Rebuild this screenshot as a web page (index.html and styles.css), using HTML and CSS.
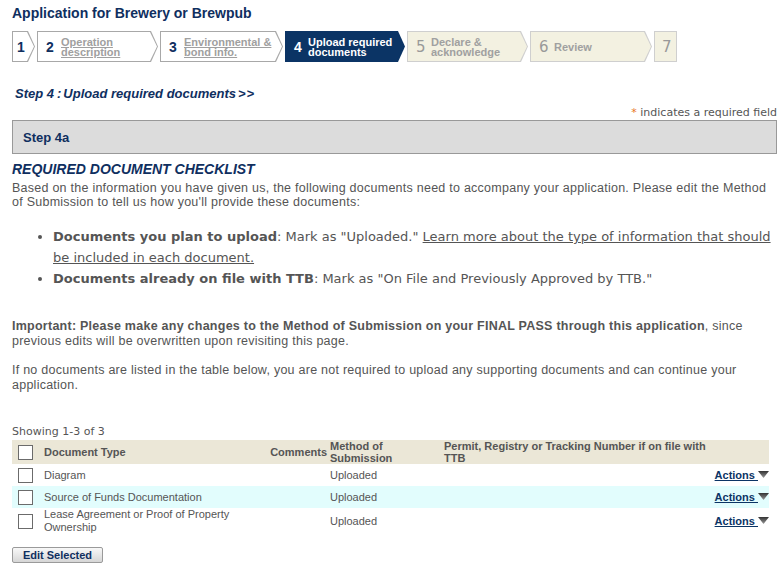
FILE: index.html
```html
<!DOCTYPE html>
<html>
<head>
<meta charset="utf-8">
<link rel="stylesheet" href="styles.css">
</head>
<body>
<div class="page">
  <h1 class="title">Application for Brewery or Brewpub</h1>

  <div class="stepper">
    <div class="step done w1"><div class="step-in"><span class="num">1</span></div></div>
    <div class="step done w2"><div class="step-in"><span class="num">2</span><a class="lbl" href="#">Operation<br>description</a></div></div>
    <div class="step done w3"><div class="step-in"><span class="num">3</span><a class="lbl" href="#">Environmental &amp;<br>bond info.</a></div></div>
    <div class="step active w4"><div class="step-in"><span class="num">4</span><span class="lbl">Upload required<br>documents</span></div></div>
    <div class="step todo w5"><div class="step-in"><span class="num">5</span><span class="lbl">Declare &amp;<br>acknowledge</span></div></div>
    <div class="step todo w6"><div class="step-in"><span class="num">6</span><span class="lbl">Review</span></div></div>
    <div class="step todo last w7"><div class="step-in"><span class="num">7</span></div></div>
  </div>

  <h2 class="step-head">Step 4<span class="colon">:</span>Upload required documents<span class="gt">&gt;&gt;</span></h2>

  <div class="req-note"><span class="ast">*</span> indicates a required field</div>

  <div class="panel-head">Step 4a</div>

  <h3 class="check-head">REQUIRED DOCUMENT CHECKLIST</h3>
  <p class="txt">Based on the information you have given us, the following documents need to accompany your application. Please edit the Method of Submission to tell us how you'll provide these documents:</p>

  <ul class="bullets">
    <li><b>Documents you plan to upload</b>: Mark as "Uploaded." <a href="#">Learn more about the type of information that should be included in each document.</a></li>
    <li><b>Documents already on file with TTB</b>: Mark as "On File and Previously Approved by TTB."</li>
  </ul>

  <p class="txt important"><b>Important: Please make any changes to the Method of Submission on your FINAL PASS through this application</b>, since previous edits will be overwritten upon revisiting this page.</p>

  <p class="txt ifno">If no documents are listed in the table below, you are not required to upload any supporting documents and can continue your application.</p>

  <div class="showing">Showing 1-3 of 3</div>

  <table class="docs">
    <colgroup>
      <col class="c-chk"><col class="c-type"><col class="c-com"><col class="c-meth"><col class="c-perm"><col class="c-act">
    </colgroup>
    <thead>
      <tr>
        <th class="chk"><span class="box"></span></th>
        <th class="type">Document Type</th>
        <th class="com">Comments</th>
        <th class="meth">Method of<br>Submission</th>
        <th class="perm">Permit, Registry or Tracking Number if on file with TTB</th>
        <th class="act"></th>
      </tr>
    </thead>
    <tbody>
      <tr>
        <td class="chk"><span class="box"></span></td>
        <td class="type">Diagram</td>
        <td class="com"></td>
        <td class="meth">Uploaded</td>
        <td class="perm"></td>
        <td class="act"><a href="#">Actions&nbsp;</a><svg class="tri" width="11" height="7" viewBox="0 0 11 7"><defs><linearGradient id="tg" x1="0" y1="0" x2="0" y2="1"><stop offset="0" stop-color="#333"/><stop offset="1" stop-color="#999"/></linearGradient></defs><polygon points="0,0 11,0 5.5,7" fill="url(#tg)"/></svg></td>
      </tr>
      <tr class="alt">
        <td class="chk"><span class="box"></span></td>
        <td class="type">Source of Funds Documentation</td>
        <td class="com"></td>
        <td class="meth">Uploaded</td>
        <td class="perm"></td>
        <td class="act"><a href="#">Actions&nbsp;</a><svg class="tri" width="11" height="7" viewBox="0 0 11 7"><polygon points="0,0 11,0 5.5,7" fill="url(#tg)"/></svg></td>
      </tr>
      <tr class="tall">
        <td class="chk"><span class="box"></span></td>
        <td class="type">Lease Agreement or Proof of Property Ownership</td>
        <td class="com"></td>
        <td class="meth">Uploaded</td>
        <td class="perm"></td>
        <td class="act"><a href="#">Actions&nbsp;</a><svg class="tri" width="11" height="7" viewBox="0 0 11 7"><polygon points="0,0 11,0 5.5,7" fill="url(#tg)"/></svg></td>
      </tr>
    </tbody>
  </table>

  <button class="btn" type="button">Edit Selected</button>
</div>
</body>
</html>
```

FILE: styles.css
```css
* { box-sizing: border-box; }
html, body { margin: 0; padding: 0; background: #fff; }
body { font-family: "Liberation Sans", Arial, sans-serif; color: #555; }
.page { padding: 5px 6px 0 12px; width: 783px; }

.title { margin: 0; font-size: 14px; line-height: 16px; font-weight: bold; color: #0f2f5f; }

.stepper { display: flex; gap: 2px; margin-top: 10px; height: 31px; }
.step {
  height: 31px; padding: 1px;
  clip-path: polygon(0 0, calc(100% - 7px) 0, 100% 50%, calc(100% - 7px) 100%, 0 100%);
}
.step-in {
  height: 100%; display: flex; align-items: center;
  clip-path: polygon(0 0, calc(100% - 7px) 0, 100% 50%, calc(100% - 7px) 100%, 0 100%);
  padding-left: 5px;
}
.step.last, .step.last .step-in { clip-path: none; }
.w1 { width: 23px; } .w2 { width: 121px; } .w3 { width: 123px; } .w4 { width: 120px; }
.w5 { width: 121px; } .w6 { width: 122px; } .w7 { width: 23px; }
.w1 .step-in { padding-left: 4px; }
.w7 .step-in { padding-left: 7px; }

.step.done { background: #a8a8a8; }
.step.done .step-in { background: #fff; }
.step.active { background: #0b3465; }
.step.active .step-in { background: #0b3465; }
.step.todo { background: #cfcfcf; }
.step.todo .step-in { background: #f3f1e1; }

.num { font-size: 14px; font-weight: bold; color: #0f2f5f; width: 14px; flex: none; }
.w2 .num, .w3 .num { padding-left: 3px; width: 18px; }
.w4 .num { padding-left: 3px; width: 17px; }
.step.active .num { color: #fff; }
.step.todo .num { color: #999; font-weight: normal; font-size: 15px; font-family: "DejaVu Sans", sans-serif; width: 18px; padding-left: 3px; }
.w7 .num { padding-left: 0 !important; }
.lbl { font-size: 11px; line-height: 10px; font-weight: bold; color: #a0a0a0; }
a.lbl { text-decoration: underline; }
.step.active .lbl { color: #fff; }

.step-head { margin: 24px 0 0 3px; font-size: 13px; line-height: 15px; font-weight: bold; font-style: italic; color: #0f2f5f; }
.step-head .colon { padding: 0 2px 0 3px; }
.step-head .gt { padding-left: 2px; letter-spacing: 1px; }

.req-note { margin-top: 5px; text-align: right; font-family: "DejaVu Sans", sans-serif; font-size: 11px; line-height: 14px; color: #555; }
.req-note .ast { color: #e87722; }

.panel-head { margin-top: 0; height: 34px; border: 1px solid #999; background: #dcdcdc; padding: 0 10px; display: flex; align-items: center; font-size: 13px; font-weight: bold; color: #0f2f5f; }

.check-head { margin: 7px 0 0; font-size: 14px; line-height: 16px; font-weight: bold; font-style: italic; color: #0f2f5f; }

.txt { margin: 4px 0 0; font-size: 12.5px; letter-spacing: 0.25px; line-height: 14px; color: #555; }
.txt.important { margin-top: 30px; line-height: 15px; }
.txt.ifno { margin-top: 14px; line-height: 15px; }

.bullets { margin: 17px 0 0; padding-left: 41px; font-family: "DejaVu Sans", sans-serif; font-size: 13px; line-height: 21px; color: #555; }
.bullets a { color: #555; }

.showing { margin-top: 32px; font-family: "DejaVu Sans", sans-serif; font-size: 11px; line-height: 14px; color: #555; }

.docs { margin-top: 1px; width: 757px; border-collapse: collapse; table-layout: fixed; font-size: 11px; color: #555; }
.c-chk { width: 28px; } .c-type { width: 230px; } .c-com { width: 58px; } .c-meth { width: 112px; } .c-perm { width: 272px; } .c-act { width: 57px; }
.docs th, .docs td { padding: 0; vertical-align: middle; text-align: left; }
.docs thead tr { background: #ebe7d7; height: 24px; }
.docs th { font-weight: bold; line-height: 12px; }
.docs tbody tr { height: 22px; }
.docs tbody tr.alt { background: #e2fdfd; }
.docs tbody tr.tall { height: 24px; }
.docs td { line-height: 13px; }
.docs .chk { padding-left: 6px; }
.box { display: block; width: 15px; height: 15px; border: 1px solid #6b6b6b; background: #fff; }
.docs .type { padding-left: 4px; }
.docs .com { text-align: right; padding-right: 1px; }
.docs .meth { padding-left: 2px; }
.docs .perm { padding-left: 4px; padding-right: 0; }
.docs .act { text-align: right; padding-right: 0; white-space: nowrap; }
.docs .act a { color: #0b3465; font-weight: bold; font-size: 11px; }
.tri { vertical-align: 1px; }

.btn { display: block; margin-top: 13px; width: 91px; height: 16px; padding: 0; border: 1px solid #9a9a9a; border-radius: 2px; background: linear-gradient(#f8f8f8, #d6d6d6); font-family: "Liberation Sans", Arial, sans-serif; font-size: 11px; font-weight: bold; color: #0f2f5f; line-height: 14px; }
```
